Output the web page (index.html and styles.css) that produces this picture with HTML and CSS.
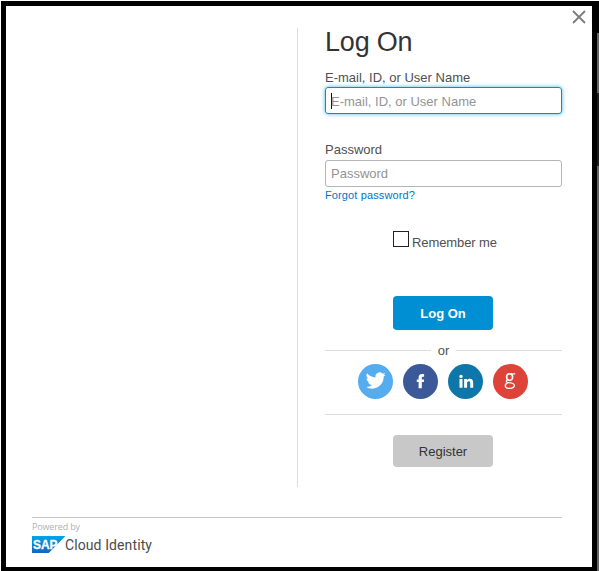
FILE: index.html
```html
<!DOCTYPE html>
<html lang="en">
<head>
<meta charset="utf-8">
<title>Log On</title>
<link rel="stylesheet" href="styles.css">
</head>
<body>
<div class="page">
  <main class="dialog">
    <button class="close" aria-label="Close">
      <svg width="14" height="14" viewBox="0 0 14 14"><path d="M1 1 13 13M13 1 1 13" stroke="#7b7b7b" stroke-width="1.8" fill="none"/></svg>
    </button>
    <div class="content">
      <form class="logon">
        <h1>Log On</h1>
        <label class="label" for="user">E-mail, ID, or User Name</label>
        <div class="field focused"><span class="caret"></span><input id="user" type="text" placeholder="E-mail, ID, or User Name"></div>
        <label class="label second" for="pass">Password</label>
        <div class="field"><input id="pass" type="password" placeholder="Password"></div>
        <a class="forgot">Forgot password?</a>
        <label class="remember"><span class="box"></span><span class="remember-text">Remember me</span></label>
        <button type="button" class="btn primary">Log On</button>
        <div class="or"><span>or</span></div>
        <div class="social">
          <a class="circle twitter"><svg width="35" height="35" viewBox="0 0 35 35"><path fill="#fff" transform="translate(7.8 6.6) scale(.83)" d="M23.95 4.57a10 10 0 0 1-2.82.77 4.96 4.96 0 0 0 2.16-2.72c-.95.55-2 .95-3.13 1.18a4.92 4.92 0 0 0-8.38 4.48C7.69 8.1 4.07 6.13 1.64 3.16a4.93 4.93 0 0 0 1.52 6.57 4.9 4.9 0 0 1-2.23-.61v.06a4.92 4.92 0 0 0 3.95 4.83 5 5 0 0 1-2.21.08 4.94 4.94 0 0 0 4.6 3.42A9.87 9.87 0 0 1 0 19.54a14 14 0 0 0 7.55 2.21c9.05 0 14-7.5 14-13.98 0-.21 0-.42-.02-.63a9.94 9.94 0 0 0 2.42-2.57z"/></svg></a>
          <a class="circle facebook"><svg width="35" height="35" viewBox="0 0 35 35"><path fill="#fff" d="M15.6 24.3v-6.2h-1.8v-2.7h1.8v-1.6c0-2.4 1.2-3.7 3.4-3.7h2.1v2.7h-1.2c-.8 0-1.1.4-1.1 1.2v1.4h2.3l-.3 2.7h-2v6.2z"/></svg></a>
          <a class="circle linkedin"><svg width="35" height="35" viewBox="0 0 35 35"><g fill="#fff"><circle cx="13" cy="12.4" r="1.7"/><path d="M11.5 15h3v8.8h-3zM16.1 15H19v1.3c.6-1 1.5-1.5 2.8-1.5 2.3 0 3.4 1.4 3.4 4v5h-3v-4.6c0-1.4-.4-2-1.4-2-1.1 0-1.7.8-1.7 2.1v4.5h-3z"/></g></svg></a>
          <a class="circle google"><svg width="35" height="35" viewBox="0 0 35 35"><g fill="none" stroke="#fff"><ellipse cx="16.6" cy="13" rx="3" ry="3.3" stroke-width="1.6"/><path stroke-width="1.2" d="M18 9.8h4.2M14.6 15.8c-1.9 1.4-1.8 2.4.2 2.7"/><path stroke-width="1.3" d="M14.6 18.4c3.4.4 6.8.4 6.8 2.9 0 1.9-1.9 3.1-4.7 3.1-2.9 0-4.4-1-4.4-2.7 0-1.5 1.2-2.4 3-3"/></g></svg></a>
        </div>
        <div class="rule"></div>
        <button type="button" class="btn register">Register</button>
      </form>
    </div>
    <footer>
      <div class="powered">Powered by</div>
      <div class="brand">
        <svg width="34" height="17" viewBox="0 0 34 17">
          <defs><linearGradient id="sap" x1="0" y1="0" x2="0" y2="1"><stop offset="0" stop-color="#00a5e6"/><stop offset="1" stop-color="#1766bd"/></linearGradient></defs>
          <path fill="url(#sap)" d="M0 0h33.5L16.8 17H0z"/>
          <text class="sap" x="1" y="13" textLength="24.5" lengthAdjust="spacingAndGlyphs">SAP</text>
        </svg>
        <span class="product">Cloud Identity</span>
      </div>
    </footer>
  </main>
  <div class="edge"><i class="thumb"></i><i class="gap"></i><i class="track"></i></div>
</div>
</body>
</html>
```
FILE: styles.css
```css
* { box-sizing: border-box; }
body {
  margin: 0;
  background: #fff;
  font-family: "Liberation Sans", Arial, sans-serif;
  font-size: 13px;
  color: #4f4f4f;
  overflow: hidden;
}
.page { display: flex; height: 571px; padding: 1px 0 0 1px; }
.dialog {
  position: relative;
  width: 596px;
  height: 570px;
  border: 5px solid #000;
  border-bottom-width: 4px;
  padding: 22px 30px 0 26px;
  background: #fff;
}
.edge { width: 2px; display: flex; flex-direction: column; background: #000; padding-top: 32px; }
.thumb { height: 60px; background: #666; }
.gap { height: 73px; background: #1b1b1b; }
.track { flex: 1; background: #666; }
.close {
  position: absolute;
  top: 4px;
  right: 6px;
  width: 14px;
  height: 14px;
  padding: 0;
  border: 0;
  background: none;
}
.close svg { display: block; }
.content { height: 459px; display: flex; justify-content: flex-end; }
.logon {
  width: 265px;
  border-left: 1px solid #dcdcdc;
  padding-left: 27px;
  display: flex;
  flex-direction: column;
}
h1 { margin: -3px 0 0; font-size: 27px; line-height: 34px; font-weight: 400; color: #333; letter-spacing: -.2px; }
.label { display: block; margin-top: 10px; height: 18px; line-height: 17px; white-space: nowrap; }
.label.second { margin-top: 27px; height: 19px; }
.field {
  height: 27px;
  border: 1px solid #b5b5b5;
  border-radius: 3px;
  padding-left: 5px;
  display: flex;
  align-items: center;
}
.field.focused { border-color: #008fd3; box-shadow: 0 0 4px #4db5ea; }
.focused input { padding-top: 1px; }
.caret { width: 1px; height: 16px; margin-right: -1px; background: #111; }
input {
  width: 100%;
  height: 25px;
  padding: 0;
  border: 0;
  outline: 0;
  background: none;
  font: 13px "Liberation Sans", Arial, sans-serif;
}
input::placeholder { color: #949494; opacity: 1; }
.forgot { font-size: 11px; line-height: 13px; margin-top: 2px; color: #0074c8; letter-spacing: .12px; }
.remember { display: flex; height: 20px; margin: 29px 0 0 68px; }
.box { width: 16px; height: 16px; border: 1px solid #222; }
.remember-text { margin: 4px 0 0 3px; line-height: 15px; letter-spacing: -.1px; }
.btn {
  margin-left: 68px;
  width: 100px;
  border: 0;
  border-radius: 4px;
  padding: 0;
  font: 13px "Liberation Sans", Arial, sans-serif;
}
.primary { height: 34px; margin-top: 45px; background: #008fd3; color: #fff; font-weight: 700; }
.register { height: 32px; margin-top: 20px; background: #c8c8c8; color: #333; }
.or { display: flex; align-items: center; gap: 7px; height: 15px; margin-top: 13px; }
.or::before, .or::after { content: ""; flex: 1; height: 1px; background: #dcdcdc; }
.social { display: flex; gap: 10px; margin: 6px 0 0 33px; }
.circle { width: 35px; height: 35px; border-radius: 50%; }
.circle svg { display: block; }
.twitter { background: #55acee; }
.facebook { background: #3b5998; }
.linkedin { background: #0e76a8; }
.google { background: #dd4339; }
.rule { height: 1px; margin-top: 15px; background: #dcdcdc; }
footer { margin-top: 30px; border-top: 1px solid #c6c6c6; padding-top: 3px; }
.powered { font: 9px/12px "Open Sans", sans-serif; color: #b1b1b1; letter-spacing: -.15px; }
.brand { display: flex; margin-top: 3px; }
.sap { font: 700 12.5px "Liberation Sans", sans-serif; fill: #fff; stroke: #fff; stroke-width: .3px; }
.product { margin-left: -1px; font: 14px/19px Roboto, sans-serif; color: #4c4c4c; letter-spacing: .1px; }
```
